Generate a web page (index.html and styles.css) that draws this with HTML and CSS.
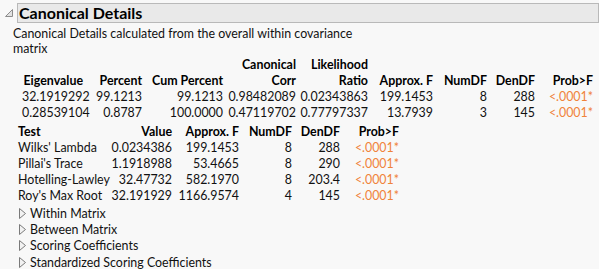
FILE: index.html
```html
<!DOCTYPE html>
<html>
<head>
<meta charset="utf-8">
<link rel="stylesheet" href="styles.css">
</head>
<body>
<div class="report">
  <div class="outline-head">
    <svg class="tri-open" width="10" height="10" viewBox="0 0 10 10"><path d="M8.5 1.5 L8.5 8.5 L1.5 8.5 Z" fill="#e2e2e2" stroke="#8c8c8c" stroke-width="1"/></svg>
    <div class="title-box">Canonical Details</div>
  </div>
  <div class="content">
    <p class="desc">Canonical Details calculated from the overall within covariance<br>matrix</p>

    <div class="grid t1">
      <div class="h"></div><div class="h"></div><div class="h"></div>
      <div class="h">Canonical</div><div class="h">Likelihood</div>
      <div class="h"></div><div class="h"></div><div class="h"></div><div class="h"></div>

      <div class="h">Eigenvalue</div><div class="h">Percent</div><div class="h">Cum Percent</div>
      <div class="h">Corr</div><div class="h">Ratio</div><div class="h">Approx. F</div>
      <div class="h">NumDF</div><div class="h">DenDF</div><div class="h">Prob&gt;F</div>

      <div>32.1919292</div><div>99.1213</div><div>99.1213</div><div>0.98482089</div><div>0.02343863</div><div>199.1453</div><div>8</div><div>288</div><div class="p">&lt;.0001*</div>
      <div>0.28539104</div><div>0.8787</div><div>100.0000</div><div>0.47119702</div><div>0.77797337</div><div>13.7939</div><div>3</div><div>145</div><div class="p">&lt;.0001*</div>
    </div>

    <div class="grid t2">
      <div class="h left">Test</div><div class="h">Value</div><div class="h">Approx. F</div><div class="h">NumDF</div><div class="h">DenDF</div><div class="h">Prob&gt;F</div>
      <div class="left">Wilks' Lambda</div><div>0.0234386</div><div>199.1453</div><div>8</div><div>288</div><div class="p">&lt;.0001*</div>
      <div class="left">Pillai's Trace</div><div>1.1918988</div><div>53.4665</div><div>8</div><div>290</div><div class="p">&lt;.0001*</div>
      <div class="left">Hotelling-Lawley</div><div>32.47732</div><div>582.1970</div><div>8</div><div>203.4</div><div class="p">&lt;.0001*</div>
      <div class="left">Roy's Max Root</div><div>32.191929</div><div>1166.9574</div><div>4</div><div>145</div><div class="p">&lt;.0001*</div>
    </div>

    <ul class="closed-list">
      <li><svg class="tri-closed" width="9" height="13" viewBox="0 0 9 13"><path d="M1.5 1.5 L7.5 6.5 L1.5 11.5 Z" fill="#f2f2f2" stroke="#7a7a7a" stroke-width="1"/></svg>Within Matrix</li>
      <li><svg class="tri-closed" width="9" height="13" viewBox="0 0 9 13"><path d="M1.5 1.5 L7.5 6.5 L1.5 11.5 Z" fill="#f2f2f2" stroke="#7a7a7a" stroke-width="1"/></svg>Between Matrix</li>
      <li><svg class="tri-closed" width="9" height="13" viewBox="0 0 9 13"><path d="M1.5 1.5 L7.5 6.5 L1.5 11.5 Z" fill="#f2f2f2" stroke="#7a7a7a" stroke-width="1"/></svg>Scoring Coefficients</li>
      <li><svg class="tri-closed" width="9" height="13" viewBox="0 0 9 13"><path d="M1.5 1.5 L7.5 6.5 L1.5 11.5 Z" fill="#f2f2f2" stroke="#7a7a7a" stroke-width="1"/></svg>Standardized Scoring Coefficients</li>
    </ul>
  </div>
</div>
</body>
</html>
```

FILE: styles.css
```css
html, body {
  margin: 0;
  padding: 0;
  background: #f8f8f8;
}
body {
  font-family: "Segoe UI", Lato, sans-serif;
  font-size: 12.4px;
  color: #111;
  overflow: hidden;
}
.report {
  padding-top: 3px;
}
.outline-head {
  display: flex;
  align-items: flex-start;
}
.tri-open {
  margin: 5px 0 0 4px;
  flex: none;
}
.title-box {
  margin-left: 3px;
  flex: 1;
  height: 18px;
  line-height: 18px;
  border: 1px solid #b9b9b9;
  background: #e9e9e9;
  font-weight: bold;
  font-size: 16px;
  color: #000;
  padding-left: 1px;
}
.content {
  padding-left: 13px;
}
.desc {
  margin: 3px 0 0 0;
  line-height: 15px;
}
.grid {
  display: grid;
  line-height: 16px;
}
.grid > div {
  text-align: right;
  white-space: nowrap;
}
.grid .h {
  font-weight: bold;
  color: #000;
}
.grid .left {
  text-align: left;
}
.grid .p {
  color: #f0833a;
}
.t1 {
  margin: 1px 0 0 9px;
  grid-template-columns: 61px 59px 81px 73px 72px 65px 54px 48px 58px;
}
.t2 {
  margin: 3px 0 0 5px;
  grid-template-columns: 92px 62px 67px 53px 48px 59px;
}
.closed-list {
  list-style: none;
  margin: 1px 0 0 5px;
  padding: 0;
}
.closed-list li {
  display: flex;
  align-items: center;
  height: 16.33px;
}
.tri-closed {
  margin-right: 3px;
  flex: none;
}
```
